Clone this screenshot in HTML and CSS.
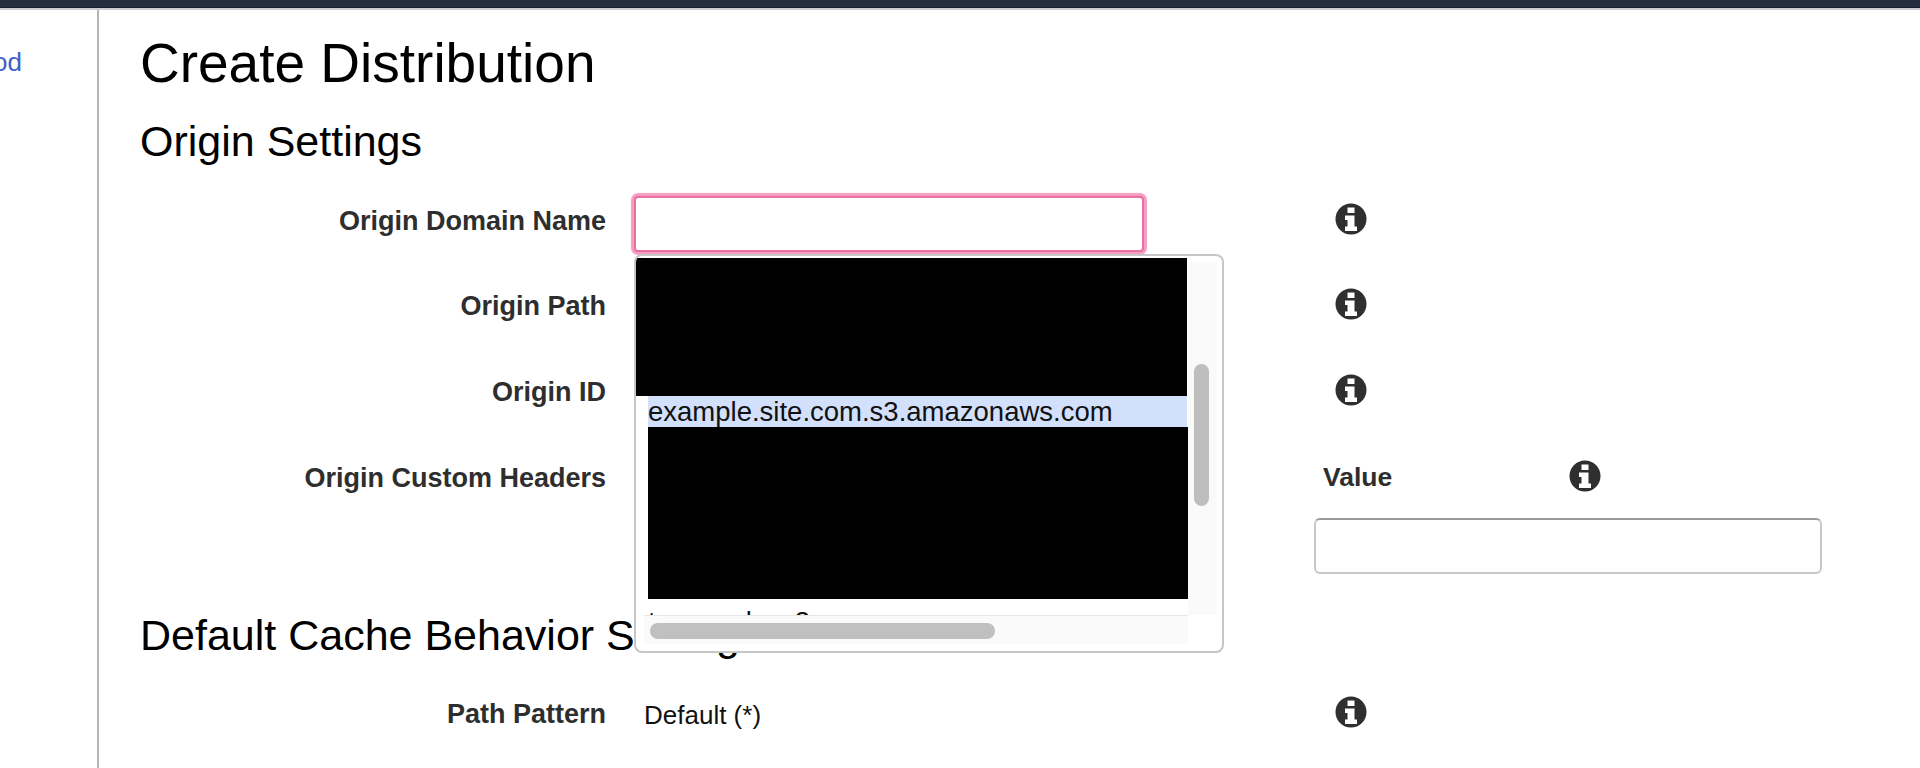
FILE: index.html
```html
<!DOCTYPE html>
<html lang="en">
<head>
<meta charset="utf-8">
<title>Create Distribution</title>
<link rel="stylesheet" href="styles.css">
</head>
<body>
<svg class="sprite" width="0" height="0" aria-hidden="true">
  <symbol id="info" viewBox="0 0 32 32">
    <circle cx="16" cy="16" r="15.5" fill="#2f2f2f"/>
    <path fill="#fff" d="M12.5 4.500h7v5.500h-7zM10 12.500h9.500v11H22v4.500H10v-4.500h2.500v-6.500H10z"/>
  </symbol>
</svg>
<header class="topbar"></header>
<div class="shell">
  <nav class="sidebar"><a class="nav-link" href="#">od</a></nav>
  <main class="content">
    <h1 class="title">Create Distribution</h1>
    <h2 class="section first">Origin Settings</h2>
    <div class="form">
      <div class="row r-domain">
        <label class="label">Origin Domain Name</label>
        <div class="control domain-wrap">
          <input class="domain-input" type="text">
          <div class="popup">
            <div class="redact redact-top"></div>
            <div class="option">example.site.com.s3.amazonaws.com</div>
            <div class="redact redact-bottom"></div>
            <div class="clipped">tesmon.lsas3</div>
            <div class="track-v"><div class="thumb-v"></div></div>
            <div class="track-h"><div class="thumb-h"></div></div>
          </div>
        </div>
        <svg class="info"><use href="#info"/></svg>
      </div>
      <div class="row r-path">
        <label class="label">Origin Path</label>
        <div class="control"></div>
        <svg class="info"><use href="#info"/></svg>
      </div>
      <div class="row r-id">
        <label class="label">Origin ID</label>
        <div class="control"></div>
        <svg class="info"><use href="#info"/></svg>
      </div>
      <div class="row r-headers">
        <label class="label">Origin Custom Headers</label>
        <div class="control"></div>
        <div class="value-col">
          <div class="value-head"><span class="value-label">Value</span><svg class="info"><use href="#info"/></svg></div>
          <input class="value-input" type="text">
        </div>
      </div>
    </div>
    <h2 class="section second">Default Cache Behavior Settings</h2>
    <div class="form">
      <div class="row r-pattern">
        <label class="label">Path Pattern</label>
        <div class="control static">Default (*)</div>
        <svg class="info"><use href="#info"/></svg>
      </div>
    </div>
  </main>
</div>
</body>
</html>
```
FILE: styles.css
```css
* { box-sizing: border-box; }
html, body { margin: 0; height: 768px; overflow: hidden; background: #fff; }
body { font-family: "Liberation Sans", Arial, sans-serif; color: #000; }
.sprite { display: block; }
.topbar { height: 10px; background: #232f3e; border-bottom: 2px solid #c9ccd0; box-shadow: inset 0 -1px 0 #16202c; }
.shell { display: flex; height: 758px; }
.sidebar { width: 99px; border-right: 2px solid #b4b4b4; padding-top: 38px; overflow: hidden; flex: none; direction: rtl; padding-right: 75px; }
.nav-link { font-size: 26px; line-height: 28px; color: #3f5fc6; text-decoration: none; }
.content { flex: 1; padding: 24px 0 0 41px; }
.title { margin: 0; font-size: 55px; line-height: 58px; font-weight: 400; }
.section { margin: 0; font-size: 43px; line-height: 46px; font-weight: 400; }
.section.first { margin-top: 26px; }
.section.second { margin-top: 0; }
.form { display: flex; flex-direction: column; }
.row { display: grid; grid-template-columns: 466px 673px 1fr; column-gap: 28px; position: relative; }
.row > .control { margin-right: -28px; }
.label { font-size: 27px; line-height: 30px; padding-top: 1px; font-weight: 700; color: #2e2e2e; text-align: right; }
.row > .info { margin-top: -2px; }
.info { width: 32px; height: 32px; display: block; }
.r-domain { height: 94px; padding-top: 9px; margin-top: 32px; }
.r-path { height: 86px; }
.r-id { height: 86px; }
.r-headers { height: 150px; }
.r-pattern { padding-top: 40px; }
.domain-wrap { position: relative; }
.domain-input { display: block; position: absolute; left: 0; top: -9px; width: 510px; height: 56px; padding: 0 12px; border: 2px solid #e8729f; border-radius: 4px; box-shadow: 0 0 1px 3px #f59cc0; background: #fff; outline: 0; }
.popup { position: absolute; z-index: 2; left: 0; top: 49px; width: 590px; height: 399px; background: #fff; border: 2px solid #c6c6c6; border-radius: 8px; overflow: hidden; }
.redact { position: absolute; background: #000; }
.redact-top { left: -2px; top: 2px; width: 553px; height: 138px; }
.redact-bottom { left: 12px; top: 171px; width: 540px; height: 172px; }
.option { position: absolute; left: 12px; top: 140px; width: 539px; height: 31px; background: #d2e0fb; font-size: 27.5px; line-height: 31px; color: #111; white-space: nowrap; }
.clipped { position: absolute; left: 12px; top: 351px; height: 8px; overflow: hidden; font-size: 27.5px; line-height: 30px; color: #111; white-space: nowrap; }
.track-v { position: absolute; left: 552px; top: 6px; width: 29px; height: 353px; background: #fafafa; }
.thumb-v { position: absolute; left: 6px; top: 102px; width: 15px; height: 142px; border-radius: 8px; background: #bebebe; }
.track-h { position: absolute; left: 8px; top: 359px; width: 544px; height: 29px; background: #fafafa; border-top: 1px solid #e6e6e6; }
.thumb-h { position: absolute; left: 6px; top: 7px; width: 345px; height: 16px; border-radius: 8px; background: #c0c0c0; }
.value-col { display: flex; flex-direction: column; margin-left: -20px; }
.value-head { display: flex; align-items: center; height: 30px; padding-left: 8px; }
.value-head .info { margin-top: -2px; }
.value-label { font-size: 26.5px; font-weight: 700; color: #2e2e2e; width: 246px; }
.value-input { width: 508px; height: 56px; margin-top: 26px; margin-left: -1px; border: 2px solid #c8c8c8; border-top-color: #9a9a9a; border-radius: 6px; background: #fff; outline: 0; }
.static { font-size: 26px; line-height: 30px; padding-top: 2px; padding-left: 10px; color: #111; }
```
